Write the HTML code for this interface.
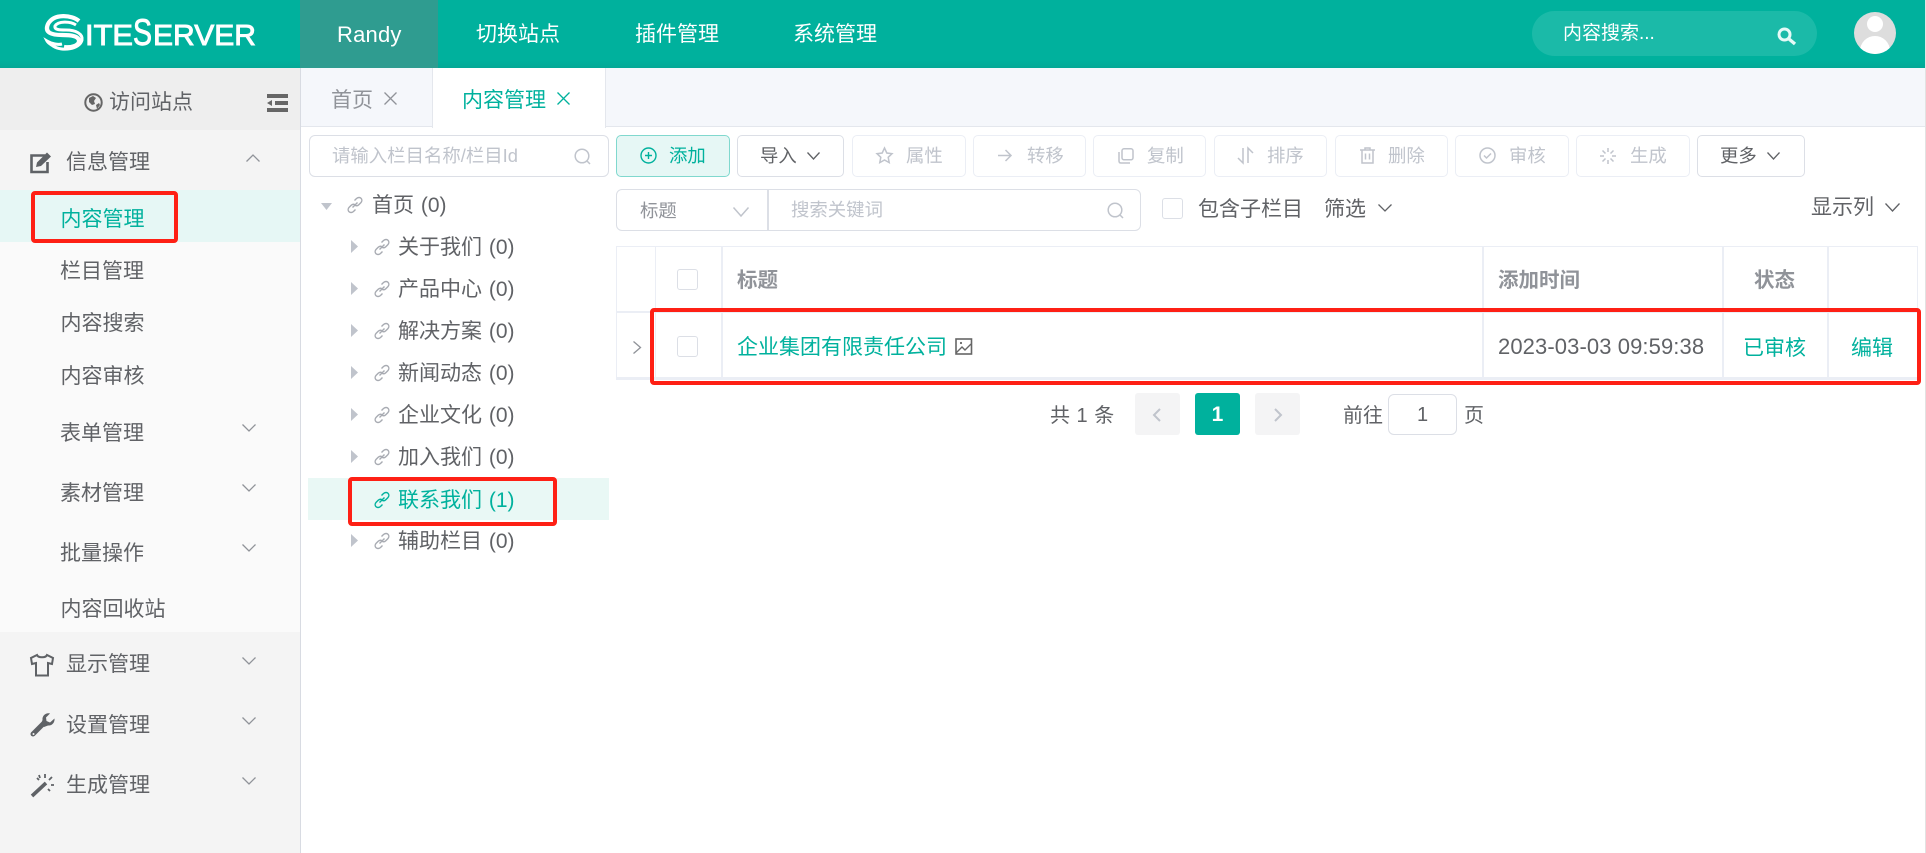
<!DOCTYPE html>
<html lang="zh-CN"><head><meta charset="utf-8"><title>SiteServer</title>
<style>
html,body{margin:0;padding:0;background:#fff}
#p{position:relative;width:1926px;height:853px;overflow:hidden;background:#fff;font-family:"Liberation Sans","Noto Sans CJK SC",sans-serif;font-size:21px;color:#606266}
#p div,#p svg{position:absolute}
.t{white-space:nowrap;line-height:30px;height:30px;margin-top:-14px}
.w{color:#fff}.g{color:#00b19d}.d{color:#c0c4cc}.m{color:#5f6266}
.t.s{font-size:18.4px;margin-top:-15px}
.b{box-sizing:border-box;border:1.5px solid #ebeef5;border-radius:5px;height:42px;top:135px}
.rb{box-sizing:border-box;border:4.5px solid #fe2015;border-radius:4px}
.h{font-weight:700;color:#909399;font-size:20.5px}
.cb{box-sizing:border-box;width:21px;height:21px;border:1.5px solid #dcdfe6;border-radius:3px;background:#fff}
svg{overflow:visible}
.ch{fill:none;stroke:#909399;stroke-width:1.3}
.ic{fill:none;stroke:#c0c4cc;stroke-width:1.5}
.tri{fill:#c0c4cc}
.ln{fill:none;stroke:#a8abb2;stroke-width:1.4}
</style></head><body><div id="p">

<!-- header -->
<div style="left:0;top:0;width:1926px;height:68px;background:linear-gradient(#00b19d 88%,#02a896)"></div>
<div style="left:300px;top:0;width:138px;height:68px;background:#2f9c90"></div>
<svg style="left:0;top:0" width="300" height="68">
<path d="M79 21C72 15 54 13 48 24C44 33 52 35 62 35C71 35 79 36 79 41C79 46 70 48 64 47" fill="none" stroke="#fff" stroke-width="4.2"/>
<path d="M76 25C70 21 58 21 55 26C54 30 60 30 66 30C76 30 83 34 82 40C80 49 62 52 53 46C50 44 48 43 47 41C52 44 58 45 62 44" fill="none" stroke="#fff" stroke-width="3"/>
<text x="85" y="45" font-family="Liberation Sans" font-size="29" fill="#fff" stroke="#fff" stroke-width=".9" textLength="48" lengthAdjust="spacingAndGlyphs">ITE</text>
<text x="133" y="45" font-family="Liberation Sans" font-size="37" fill="#fff" stroke="#fff" stroke-width=".9" textLength="19" lengthAdjust="spacingAndGlyphs">S</text>
<text x="153" y="45" font-family="Liberation Sans" font-size="29" fill="#fff" stroke="#fff" stroke-width=".9" textLength="103" lengthAdjust="spacingAndGlyphs">ERVER</text>
</svg>
<div class="t w" style="left:337px;top:34px;font-size:22px;letter-spacing:.2px">Randy</div>
<div class="t w" style="left:476px;top:34px">切换站点</div>
<div class="t w" style="left:635px;top:34px">插件管理</div>
<div class="t w" style="left:793px;top:34px">系统管理</div>
<div style="left:1532px;top:11px;width:285px;height:45px;border-radius:23px;background:#1bbaa8"></div>
<div class="t w" style="left:1563px;top:33px;font-size:19px">内容搜索...</div>
<svg style="left:1777px;top:27px" width="20" height="18"><circle cx="7.5" cy="7.5" r="5.5" fill="none" stroke="#e6faf7" stroke-width="3"/><path d="M12 12l6 5" stroke="#e6faf7" stroke-width="3.4" fill="none"/></svg>
<div style="left:1854px;top:12px;width:42px;height:42px;border-radius:50%;background:#ddd;overflow:hidden">
<div style="left:13px;top:4px;width:16px;height:16px;border-radius:50%;background:#fff"></div>
<div style="left:6px;top:24px;width:30px;height:30px;border-radius:50%;background:#fff"></div></div>

<!-- sidebar -->
<div style="left:0;top:68px;width:300px;height:785px;background:#f4f4f4;border-right:1px solid #d8dbe2"></div>
<div style="left:0;top:68px;width:300px;height:62px;background:#eeeeee"></div>
<div style="left:0;top:190px;width:300px;height:442px;background:#fafafa"></div>
<div style="left:0;top:190px;width:300px;height:52px;background:#e6f7f5"></div>

<svg style="left:84px;top:93px" width="19" height="19"><circle cx="9.5" cy="9.5" r="8.2" fill="none" stroke="#666" stroke-width="2"/><path d="M5 5l4-2 3 2-2 3 1 3-3 1-3-3zM12 12l3-2 1 2-3 4z" fill="#666"/></svg>
<div class="t" style="left:109px;top:102px">访问站点</div>
<svg style="left:267px;top:94px" width="21" height="18"><path d="M0 0h21v4H0zM8 7h13v4H8zM0 14h21v4H0z" fill="#666"/><path d="M0 9l5-3v6z" fill="#666"/></svg>

<svg style="left:30px;top:152px" width="23" height="21"><path d="M15 3.500H1.500V20h16V10" fill="none" stroke="#5f6266" stroke-width="2.6"/><path d="M6 15l1-4.500L17 .5l4 4L11 14z" fill="#5f6266"/></svg>
<div class="t" style="left:66px;top:162px">信息管理</div>
<svg class="ch" style="left:246px;top:154px" width="14" height="8"><path d="M.5 7.5L7 1l6.5 6.5"/></svg>
<div class="t g" style="left:60.5px;top:219px">内容管理</div>
<div class="t" style="left:60px;top:271px">栏目管理</div>
<div class="t" style="left:60.5px;top:323px">内容搜索</div>
<div class="t" style="left:60.5px;top:376px">内容审核</div>
<div class="t" style="left:60px;top:433px">表单管理</div>
<svg class="ch" style="left:242px;top:424px" width="14" height="8"><path d="M.5 .5L7 7l6.5-6.5"/></svg>
<div class="t" style="left:60px;top:493px">素材管理</div>
<svg class="ch" style="left:242px;top:484px" width="14" height="8"><path d="M.5 .5L7 7l6.5-6.5"/></svg>
<div class="t" style="left:60px;top:552.5px">批量操作</div>
<svg class="ch" style="left:242px;top:544px" width="14" height="8"><path d="M.5 .5L7 7l6.5-6.5"/></svg>
<div class="t" style="left:60.5px;top:609px">内容回收站</div>

<svg style="left:30px;top:654px" width="24" height="23"><path d="M7 1L1 4l1 6 4-1v12.500h12V9l4 1 1-6-6-3c-1 3-9 3-10 0z" fill="none" stroke="#5f6266" stroke-width="2"/></svg>
<div class="t" style="left:66px;top:664px">显示管理</div>
<svg class="ch" style="left:242px;top:657px" width="14" height="8"><path d="M.5 .5L7 7l6.500-6.500"/></svg>
<svg style="left:30px;top:713px" width="25" height="25"><path d="M3 21L14 10" stroke="#5f6266" stroke-width="5" stroke-linecap="round" fill="none"/><path d="M20 .500c-4-1-8 2-7.500 6.500L11 11l3 3 4-1.500c4 .500 7-3 6.500-7L20 9.500 16.500 8 16 4.500z" fill="#5f6266"/><circle cx="3.500" cy="21" r="1" fill="#f4f4f4"/></svg>
<div class="t" style="left:66px;top:725px">设置管理</div>
<svg class="ch" style="left:242px;top:717px" width="14" height="8"><path d="M.5 .5L7 7l6.500-6.500"/></svg>
<svg style="left:30px;top:773px" width="25" height="25"><path d="M2 23L16 10" stroke="#5f6266" stroke-width="3.600" fill="none"/><path d="M7 5l2 2M15 1v4M22 4l-3 3M24 12h-3M20 18l-2-2M9 2l1 3" stroke="#5f6266" stroke-width="1.800" fill="none"/></svg>
<div class="t" style="left:66px;top:785px">生成管理</div>
<svg class="ch" style="left:242px;top:777px" width="14" height="8"><path d="M.5 .5L7 7l6.500-6.500"/></svg>

<!-- tabs -->
<div style="left:301px;top:68px;width:1625px;height:58px;background:#f5f7fb;border-bottom:1.500px solid #e4e7ed"></div>
<div style="left:432px;top:68px;width:172px;height:60px;background:#fff;border-left:1.500px solid #e4e7ed;border-right:1.500px solid #e4e7ed"></div>
<div class="t" style="left:331px;top:100px;color:#909399">首页</div>
<svg style="left:384px;top:92px" width="13" height="13"><path d="M.5 .5l12 12M12.500 .5l-12 12" stroke="#909399" stroke-width="1.300" fill="none"/></svg>
<div class="t g" style="left:462px;top:100px">内容管理</div>
<svg style="left:557px;top:92px" width="13" height="13"><path d="M.5 .5l12 12M12.500 .5l-12 12" stroke="#00b19d" stroke-width="1.300" fill="none"/></svg>
<div style="left:1925px;top:0;width:1px;height:853px;background:#e2e2e2"></div>

<!-- tree -->
<div style="box-sizing:border-box;left:309px;top:135px;width:300px;height:42px;border:1.500px solid #dcdfe6;border-radius:6px"></div>
<div class="t s d" style="left:332px;top:156px">请输入栏目名称/栏目Id</div>
<svg style="left:574px;top:148px" width="17" height="17"><circle cx="8" cy="8" r="6.800" fill="none" stroke="#c0c4cc" stroke-width="1.500"/><path d="M13 13l3 3" stroke="#c0c4cc" stroke-width="1.500"/></svg>

<div style="left:308px;top:478px;width:301px;height:42px;background:#e9f8f5"></div>
<svg width="0" height="0" style="left:0;top:0"><defs><g id="lk"><path d="M7.500 3.500l2-2c1.500-1.300 3.500-1.300 4.500-.2 1.200 1.200 1.100 3.100-.2 4.400l-2 2c-1.300 1.300-3 1.200-4.200.3" fill="none" stroke="currentColor" stroke-width="1.400"/><path d="M8.500 12.500l-2 2c-1.500 1.300-3.500 1.300-4.500.2-1.200-1.200-1.100-3.100.2-4.400l2-2c1.300-1.300 3-1.200 4.200-.3" fill="none" stroke="currentColor" stroke-width="1.400"/><path d="M5.500 10.500l5-5" stroke="currentColor" stroke-width="1.400"/></g></defs></svg>

<svg class="tri" style="left:321px;top:203px" width="11" height="7"><path d="M0 0h11L5.500 7z"/></svg>
<svg style="left:347px;top:197px;color:#a8abb2" width="16" height="16"><use href="#lk"/></svg>
<div class="t" style="left:372px;top:205px;word-spacing:1px">首页 (0)</div>

<svg class="tri" style="left:351px;top:240px" width="7" height="13"><path d="M0 0l7 6.500L0 13z"/></svg>
<svg style="left:373.500px;top:239px;color:#a8abb2" width="16" height="16"><use href="#lk"/></svg>
<div class="t" style="left:398px;top:247px;word-spacing:1px">关于我们 (0)</div>

<svg class="tri" style="left:351px;top:282px" width="7" height="13"><path d="M0 0l7 6.500L0 13z"/></svg>
<svg style="left:373.500px;top:281px;color:#a8abb2" width="16" height="16"><use href="#lk"/></svg>
<div class="t" style="left:398px;top:289px;word-spacing:1px">产品中心 (0)</div>

<svg class="tri" style="left:351px;top:324px" width="7" height="13"><path d="M0 0l7 6.500L0 13z"/></svg>
<svg style="left:373.500px;top:323px;color:#a8abb2" width="16" height="16"><use href="#lk"/></svg>
<div class="t" style="left:398px;top:331px;word-spacing:1px">解决方案 (0)</div>

<svg class="tri" style="left:351px;top:366px" width="7" height="13"><path d="M0 0l7 6.500L0 13z"/></svg>
<svg style="left:373.500px;top:365px;color:#a8abb2" width="16" height="16"><use href="#lk"/></svg>
<div class="t" style="left:398px;top:373px;word-spacing:1px">新闻动态 (0)</div>

<svg class="tri" style="left:351px;top:408px" width="7" height="13"><path d="M0 0l7 6.500L0 13z"/></svg>
<svg style="left:373.500px;top:407px;color:#a8abb2" width="16" height="16"><use href="#lk"/></svg>
<div class="t" style="left:398px;top:415px;word-spacing:1px">企业文化 (0)</div>

<svg class="tri" style="left:351px;top:450px" width="7" height="13"><path d="M0 0l7 6.500L0 13z"/></svg>
<svg style="left:373.500px;top:449px;color:#a8abb2" width="16" height="16"><use href="#lk"/></svg>
<div class="t" style="left:398px;top:457px;word-spacing:1px">加入我们 (0)</div>

<svg style="left:373.500px;top:492px;color:#00b19d" width="16" height="16"><use href="#lk"/></svg>
<div class="t g" style="left:398px;top:500px;word-spacing:1px">联系我们 (1)</div>

<svg class="tri" style="left:351px;top:534px" width="7" height="13"><path d="M0 0l7 6.500L0 13z"/></svg>
<svg style="left:373.500px;top:533px;color:#a8abb2" width="16" height="16"><use href="#lk"/></svg>
<div class="t" style="left:398px;top:541px;word-spacing:1px">辅助栏目 (0)</div>

<!-- toolbar -->
<div class="b" style="left:616px;width:114px;background:#e6f7f5;border-color:#80d8ce"></div>
<svg style="left:640px;top:147px" width="17" height="17"><circle cx="8.500" cy="8.500" r="7.500" fill="none" stroke="#00b19d" stroke-width="1.400"/><path d="M8.500 5v7M5 8.500h7" stroke="#00b19d" stroke-width="1.400"/></svg>
<div class="t s g" style="left:669px;top:156px">添加</div>

<div class="b" style="left:737px;width:107px;border-color:#dcdfe6"></div>
<div class="t s" style="left:760px;top:156px">导入</div>
<svg class="ch" style="left:807px;top:152px;stroke:#606266" width="13" height="8"><path d="M.5 .5L6.500 7l6-6.500"/></svg>

<div class="b" style="left:852px;width:114px"></div>
<svg class="ic" style="left:876px;top:147px" width="17" height="17"><path d="M8.500 1l2.300 5 5.200 .7-3.800 3.600 1 5.300-4.700-2.600-4.700 2.600 1-5.300L1 6.700 6.200 6z"/></svg>
<div class="t s d" style="left:906px;top:156px">属性</div>

<div class="b" style="left:973px;width:113px"></div>
<svg class="ic" style="left:998px;top:149px" width="14" height="13"><path d="M0 6.500h13M7.500 1l5.500 5.500L7.500 12"/></svg>
<div class="t s d" style="left:1027px;top:156px">转移</div>

<div class="b" style="left:1093px;width:113px"></div>
<svg class="ic" style="left:1118px;top:148px" width="16" height="16"><rect x="4" y=".8" width="11" height="11" rx="2"/><path d="M1 4v9c0 1.500 1 2 2 2h9"/></svg>
<div class="t s d" style="left:1147px;top:156px">复制</div>

<div class="b" style="left:1214px;width:113px"></div>
<svg class="ic" style="left:1238px;top:148px" width="16" height="16"><path d="M5 0v15L0 10M10 15V0l5 5"/></svg>
<div class="t s d" style="left:1267px;top:156px">排序</div>

<div class="b" style="left:1335px;width:113px"></div>
<svg class="ic" style="left:1360px;top:147px" width="15" height="17"><path d="M0 3h15M5 3V1h5v2M2 3v13h11V3M5.500 6.500v6M9.500 6.500v6"/></svg>
<div class="t s d" style="left:1388px;top:156px">删除</div>

<div class="b" style="left:1455px;width:114px"></div>
<svg class="ic" style="left:1479px;top:147px" width="17" height="17"><circle cx="8.500" cy="8.500" r="7.500"/><path d="M5 8.500l2.500 2.500 4.500-4.500"/></svg>
<div class="t s d" style="left:1509px;top:156px">审核</div>

<div class="b" style="left:1576px;width:114px"></div>
<svg class="ic" style="left:1600px;top:148px" width="16" height="16"><path d="M8 0v4M8 12v4M0 8h4M12 8h4M2.500 2.500l3 3M13.500 2.500l-3 3M2.500 13.500l3-3M13.500 13.500l-3-3"/></svg>
<div class="t s d" style="left:1630px;top:156px">生成</div>

<div class="b" style="left:1697px;width:108px;border-color:#dcdfe6"></div>
<div class="t s" style="left:1720px;top:156px">更多</div>
<svg class="ch" style="left:1767px;top:152px;stroke:#606266" width="13" height="8"><path d="M.5 .5L6.500 7l6-6.500"/></svg>

<!-- search row -->
<div style="box-sizing:border-box;left:616px;top:189px;width:525px;height:42px;border:1.500px solid #dcdfe6;border-radius:6px"></div>
<div style="left:767px;top:190px;width:1.500px;height:40px;background:#dcdfe6"></div>
<div class="t s" style="left:640px;top:211px;color:#909399">标题</div>
<svg class="ch" style="left:733px;top:207px;stroke:#c0c4cc;stroke-width:1.500" width="16" height="10"><path d="M.5 .5L8 9l7.500-8.500"/></svg>
<div class="t s d" style="left:791px;top:210px">搜索关键词</div>
<svg style="left:1107px;top:202px" width="17" height="17"><circle cx="8" cy="8" r="6.800" fill="none" stroke="#c0c4cc" stroke-width="1.500"/><path d="M13 13l3 3" stroke="#c0c4cc" stroke-width="1.500"/></svg>
<div class="cb" style="left:1162px;top:198px"></div>
<div class="t" style="left:1198px;top:209px">包含子栏目</div>
<div class="t" style="left:1324px;top:209px">筛选</div>
<svg class="ch" style="left:1378px;top:204px;stroke:#606266" width="14" height="8"><path d="M.5 .5L7 7l6.500-6.500"/></svg>
<div class="t" style="left:1811px;top:207px">显示列</div>
<svg class="ch" style="left:1885px;top:203px;stroke:#606266" width="15" height="9"><path d="M.5 .5L7.500 8l7-7.500"/></svg>

<!-- table -->
<div style="box-sizing:border-box;left:616px;top:246px;width:1302px;height:134px;border:1.500px solid #ebeef5;border-bottom-width:3px"></div>
<div style="left:617px;top:311px;width:1300px;height:1.500px;background:#ebeef5"></div>
<div style="left:654.500px;top:246px;width:1.500px;height:132px;background:#ebeef5"></div>
<div style="left:721px;top:246px;width:1.500px;height:132px;background:#ebeef5"></div>
<div style="left:1482px;top:246px;width:1.500px;height:132px;background:#ebeef5"></div>
<div style="left:1722px;top:246px;width:1.500px;height:132px;background:#ebeef5"></div>
<div style="left:1827px;top:246px;width:1.500px;height:132px;background:#ebeef5"></div>
<div class="cb" style="left:677px;top:269px"></div>
<div class="t h" style="left:737px;top:280px">标题</div>
<div class="t h" style="left:1498px;top:280px">添加时间</div>
<div class="t h" style="left:1754px;top:280px">状态</div>
<svg style="left:633px;top:341px" width="9" height="13"><path d="M.5 .5l7 6-7 6" fill="none" stroke="#909399" stroke-width="1.300"/></svg>
<div class="cb" style="left:677px;top:336px"></div>
<div class="t g" style="left:737px;top:347px">企业集团有限责任公司</div>
<svg style="left:955px;top:338px" width="18" height="17"><rect x="1" y="1" width="15.500" height="15" fill="none" stroke="#666" stroke-width="1.600"/><path d="M1 15l6-6 3 3 6-6" fill="none" stroke="#666" stroke-width="1.400"/><circle cx="6" cy="5" r="1.100" fill="#666"/></svg>
<div class="t" style="left:1498px;top:346px;font-size:22px;letter-spacing:.1px">2023-03-03 09:59:38</div>
<div class="t g" style="left:1743px;top:348px">已审核</div>
<div class="t g" style="left:1851px;top:348px">编辑</div>

<!-- pagination -->
<div class="t" style="left:1050px;top:415px;font-size:20px;word-spacing:1px">共 1 条</div>
<div style="left:1135px;top:393px;width:45px;height:42px;background:#f4f4f5;border-radius:3px"></div>
<svg style="left:1152px;top:408px" width="10" height="14"><path d="M8 1L2 7l6 6" fill="none" stroke="#c0c4cc" stroke-width="2"/></svg>
<div style="left:1195px;top:393px;width:45px;height:42px;background:#00b19d;border-radius:3px"></div>
<div class="t w" style="left:1195px;top:414px;width:45px;text-align:center;font-weight:700">1</div>
<div style="left:1255px;top:393px;width:45px;height:42px;background:#f4f4f5;border-radius:3px"></div>
<svg style="left:1273px;top:408px" width="10" height="14"><path d="M2 1l6 6-6 6" fill="none" stroke="#c0c4cc" stroke-width="2"/></svg>
<div class="t" style="left:1343px;top:415px;font-size:20px">前往</div>
<div style="box-sizing:border-box;left:1388px;top:394px;width:69px;height:41px;border:1.500px solid #dcdfe6;border-radius:6px"></div>
<div class="t" style="left:1388px;top:414px;width:69px;text-align:center;font-size:20px">1</div>
<div class="t" style="left:1464px;top:415px;font-size:20px">页</div>

<!-- red annotation boxes -->
<div class="rb" style="left:31px;top:191px;width:147px;height:52px"></div>
<div class="rb" style="left:348px;top:477px;width:209px;height:49px"></div>
<div class="rb" style="left:650px;top:308px;width:1271px;height:77px"></div>
</div></body></html>
